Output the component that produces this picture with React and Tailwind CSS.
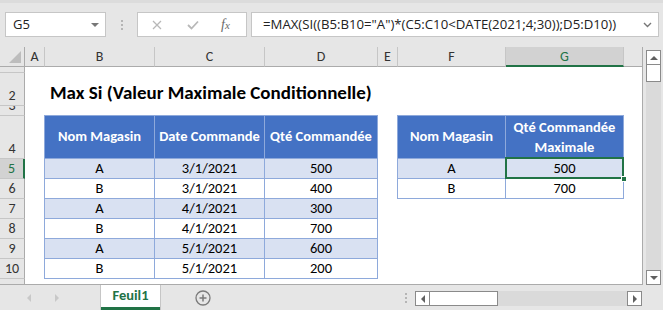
import React from "react";

const cellFont = { fontFamily: '"Carlito", "Lato", "Liberation Sans", sans-serif' };

const colHeads = [
  { k: "A", w: 20 },
  { k: "B", w: 110 },
  { k: "C", w: 110 },
  { k: "D", w: 113 },
  { k: "E", w: 20 },
  { k: "F", w: 108 },
  { k: "G", w: 118 },
];

const rowHeads = ["1", "2", "3", "4", "5", "6", "7", "8", "9", "10", ""];

const data = [
  ["A", "3/1/2021", "500"],
  ["B", "3/1/2021", "400"],
  ["A", "4/1/2021", "300"],
  ["B", "4/1/2021", "700"],
  ["A", "5/1/2021", "600"],
  ["B", "5/1/2021", "200"],
];

function Tri({ dir, className }) {
  const pts = {
    down: "0,0 8,0 4,4",
    up: "0,4 8,4 4,0",
    left: "4,0 4,8 0,4",
    right: "0,0 0,8 4,4",
  }[dir];
  const vb = dir === "down" || dir === "up" ? "0 0 8 4" : "0 0 4 8";
  const size = dir === "down" || dir === "up" ? { w: 8, h: 4 } : { w: 4, h: 8 };
  return (
    <svg width={size.w} height={size.h} viewBox={vb} className={className}>
      <polygon points={pts} fill="currentColor" />
    </svg>
  );
}

export default function App() {
  return (
    <div className="w-[663px] h-[310px] bg-[#e6e6e6] flex flex-col overflow-hidden select-none">
      {/* Formula bar */}
      <div className="h-[47px] flex items-start pt-[12px] pl-[5px] shrink-0 border-t-[3px] border-[#dcdcdc]">
        <div className="w-[101px] h-[25px] bg-white border border-[#c6c6c6] flex items-center justify-between pl-[7px] pr-[6px] -mt-[3px]">
          <span className="text-[13px] text-[#222]" style={{ fontFamily: '"Open Sans", sans-serif' }}>G5</span>
          <Tri dir="down" className="text-[#777]" />
        </div>
        <div className="w-[31px] h-[25px] -mt-[3px] flex flex-col items-center justify-center gap-[2px]">
          <span className="w-[2px] h-[2px] bg-[#b5b5b5]" />
          <span className="w-[2px] h-[2px] bg-[#b5b5b5]" />
          <span className="w-[2px] h-[2px] bg-[#b5b5b5]" />
        </div>
        <div className="w-[110px] h-[25px] -mt-[3px] bg-white border border-[#c6c6c6] flex items-center">
          <svg width="10" height="10" viewBox="0 0 10 10" className="ml-[14px]">
            <path d="M1 1 L9 9 M9 1 L1 9" stroke="#b8b8b8" strokeWidth="1.3" />
          </svg>
          <svg width="12" height="10" viewBox="0 0 12 10" className="ml-[25px]">
            <path d="M1 5 L4.5 8.5 L11 1.5" stroke="#b8b8b8" strokeWidth="1.8" fill="none" />
          </svg>
          <span
            className="ml-[22px] text-[14px] italic text-[#6a6a6a]"
            style={{ fontFamily: '"Liberation Serif", serif' }}
          >
            f<span className="text-[11px]">x</span>
          </span>
        </div>
        <div className="w-[408px] h-[25px] -mt-[3px] ml-[4px] bg-white border border-[#c6c6c6] flex items-center justify-between pl-[11px] pr-[6px]">
          <span className="text-[13.2px] text-[#222] whitespace-nowrap" style={{ fontFamily: '"Open Sans", sans-serif' }}>
            =MAX(SI((B5:B10="A")*(C5:C10&lt;DATE(2021;4;30));D5:D10))
          </span>
          <svg width="9" height="6" viewBox="0 0 9 6">
            <path d="M1 1 L4.5 4.5 L8 1" stroke="#777" strokeWidth="1.4" fill="none" />
          </svg>
        </div>
      </div>

      {/* Sheet + vertical scrollbar */}
      <div className="flex h-[238px] shrink-0">
        <div className="w-[643px] h-[238px] bg-white border-r border-b border-[#ababab] overflow-hidden">
          <div
            className="grid grid-cols-[25px_20px_110px_110px_113px_20px_108px_118px_19px] grid-rows-[20px_6px_33px_10px_43px_repeat(6,20px)_6px]"
            style={cellFont}
          >
            {/* corner */}
            <div className="col-start-1 row-start-1 bg-[#e6e6e6] border-r border-b border-[#ababab] relative">
              <svg width="12" height="12" viewBox="0 0 12 12" className="absolute right-[3px] bottom-[3px]">
                <polygon points="12,0 12,12 0,12" fill="#bdbdbd" />
              </svg>
            </div>
            {colHeads.map((c, i) => (
              <div
                key={c.k}
                className={
                  c.k === "G"
                    ? "row-start-1 bg-[#d2d2d2] border-r border-[#c6c6c6] border-b-2 border-b-[#217346] flex items-center justify-center text-[14px] text-[#217346]"
                    : "row-start-1 bg-[#e6e6e6] border-r border-[#c6c6c6] border-b border-b-[#ababab] flex items-center justify-center text-[14px] text-[#333]"
                }
                style={{ gridColumnStart: i + 2 }}
              >
                {c.k}
              </div>
            ))}
            <div className="row-start-1 col-start-9 bg-[#e6e6e6] border-b border-[#ababab]" />

            {/* row headers */}
            {rowHeads.map((r, i) => (
              <div
                key={i}
                className={
                  r === "5"
                    ? "col-start-1 bg-[#d2d2d2] border-b border-[#c6c6c6] border-r-2 border-r-[#217346] flex items-end justify-center overflow-hidden text-[14px] text-[#217346] leading-[18px]"
                    : "col-start-1 bg-[#e6e6e6] border-b border-[#c6c6c6] border-r border-r-[#ababab] flex items-end justify-center overflow-hidden text-[14px] text-[#333] leading-[18px]"
                }
                style={{ gridRowStart: i + 2 }}
              >
                {r}
              </div>
            ))}

            {/* Title */}
            <div className="col-start-3 col-span-6 row-start-3 flex items-end pl-[5px] pb-[1px]">
              <span className="text-[19px] font-bold text-black whitespace-nowrap leading-[24px]">
                Max Si (Valeur Maximale Conditionnelle)
              </span>
            </div>

            {/* Table 1 */}
            <div className="col-start-3 col-span-3 row-start-5 row-span-7 grid grid-cols-[110px_110px_113px] grid-rows-[43px_repeat(6,20px)] border-l border-t border-[#8ea9db] w-[334px] h-[164px] -ml-px -mt-px">
              {["Nom Magasin", "Date Commande", "Qté Commandée"].map((h) => (
                <div
                  key={h}
                  className="bg-[#4472c4] border-r border-b border-[#8ea9db] flex items-center justify-center text-white font-bold text-[14.5px] whitespace-nowrap"
                >
                  {h}
                </div>
              ))}
              {data.map((row, ri) =>
                row.map((v, ci) => (
                  <div
                    key={ri + "-" + ci}
                    className={
                      (ri % 2 === 0 ? "bg-[#d9e1f2] " : "bg-white ") +
                      "border-r border-b border-[#8ea9db] flex items-center justify-center text-[14.5px] text-black"
                    }
                  >
                    {v}
                  </div>
                ))
              )}
            </div>

            {/* Table 2 */}
            <div className="col-start-7 col-span-2 row-start-5 row-span-3 grid grid-cols-[108px_118px] grid-rows-[43px_20px_20px] border-l border-t border-[#8ea9db] w-[227px] h-[84px] -ml-px -mt-px">
              <div className="bg-[#4472c4] border-r border-b border-[#8ea9db] flex items-center justify-center text-white font-bold text-[14.5px]">
                Nom Magasin
              </div>
              <div className="bg-[#4472c4] border-r border-b border-[#8ea9db] flex items-center justify-center text-center text-white font-bold text-[14.5px] leading-[20px]">
                Qté Commandée
                <br />
                Maximale
              </div>
              <div className="bg-[#d9e1f2] border-r border-b border-[#8ea9db] flex items-center justify-center text-[14.5px] text-black">
                A
              </div>
              <div className="bg-[#d9e1f2] border-r border-b border-[#8ea9db] flex items-center justify-center text-[14.5px] text-black relative">
                500
                <div className="absolute -left-[1px] -top-[2px] -right-[1px] -bottom-[1px] border-2 border-[#217346]" />
                <div className="absolute -right-[4px] -bottom-[4px] w-[6px] h-[6px] bg-[#217346] border border-white" />
              </div>
              <div className="bg-white border-r border-b border-[#8ea9db] flex items-center justify-center text-[14.5px] text-black">
                B
              </div>
              <div className="bg-white border-r border-b border-[#8ea9db] flex items-center justify-center text-[14.5px] text-black">
                700
              </div>
            </div>
          </div>
        </div>

        {/* vertical scrollbar */}
        <div className="w-[20px] flex flex-col pl-[3px] pt-[3px]">
          <div className="w-[15px] h-[235px] bg-[#dadada] flex flex-col justify-between">
            <div className="flex flex-col">
              <div className="w-[15px] h-[15px] bg-white border border-[#8a8a8a] flex items-center justify-center">
                <Tri dir="up" className="text-[#606060]" />
              </div>
              <div className="w-[15px] h-[17px] bg-white border border-[#8a8a8a] border-t-0" />
            </div>
            <div className="w-[15px] h-[15px] bg-white border border-[#8a8a8a] flex items-center justify-center">
              <Tri dir="down" className="text-[#606060]" />
            </div>
          </div>
        </div>
      </div>

      {/* Tab bar */}
      <div className="h-[25px] flex items-stretch shrink-0">
        <div className="w-[100px] flex items-center">
          <Tri dir="left" className="ml-[27px] text-[#c8c8c8]" />
          <Tri dir="right" className="ml-[24px] text-[#c8c8c8]" />
        </div>
        <div className="w-[61px] bg-white border-l border-r border-[#c6c6c6] flex flex-col">
          <div className="flex-1 flex items-center justify-center">
            <span className="text-[14.5px] font-bold text-[#217346]" style={cellFont}>
              Feuil1
            </span>
          </div>
          <div className="h-[3px] bg-[#217346]" />
        </div>
        <div className="w-[236px] flex items-center">
          <svg width="16" height="16" viewBox="0 0 16 16" className="ml-[34px]">
            <circle cx="8" cy="8" r="7" stroke="#7a7a7a" strokeWidth="1.3" fill="none" />
            <path d="M8 4.5 V11.5 M4.5 8 H11.5" stroke="#7a7a7a" strokeWidth="1.5" />
          </svg>
        </div>
        <div className="w-[18px] flex flex-col items-center justify-center gap-[2px]">
          <span className="w-[2px] h-[2px] bg-[#b5b5b5]" />
          <span className="w-[2px] h-[2px] bg-[#b5b5b5]" />
          <span className="w-[2px] h-[2px] bg-[#b5b5b5]" />
        </div>
        <div className="w-[227px] h-[15px] mt-[6px] bg-[#dadada] flex">
          <div className="w-[15px] h-[15px] bg-white border border-[#8a8a8a] flex items-center justify-center">
            <Tri dir="left" className="text-[#606060]" />
          </div>
          <div className="w-[68px] h-[15px] bg-white border border-[#8a8a8a] border-l-0" />
          <div className="flex-1" />
          <div className="w-[15px] h-[15px] bg-white border border-[#8a8a8a] flex items-center justify-center">
            <Tri dir="right" className="text-[#606060]" />
          </div>
        </div>
      </div>
    </div>
  );
}
